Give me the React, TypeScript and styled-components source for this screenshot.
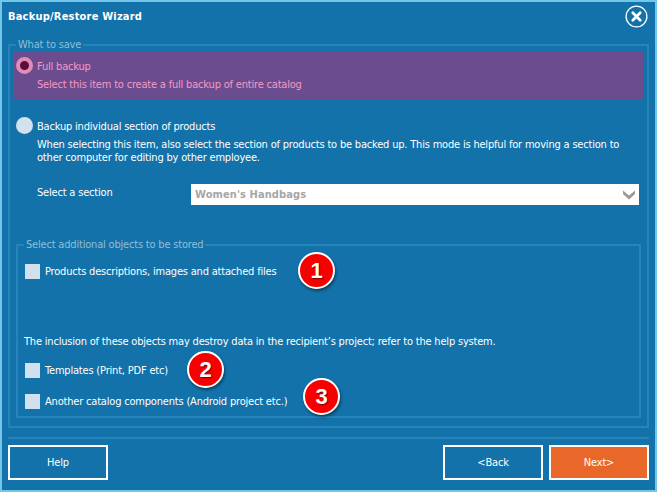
import React from "react";
import styled, { createGlobalStyle } from "styled-components";

const GlobalStyle = createGlobalStyle`
  html, body {
    margin: 0;
    padding: 0;
    background: #1372a9;
  }
  body {
    font-family: "DejaVu Sans Condensed", "DejaVu Sans", "Liberation Sans", sans-serif;
    font-size: 11px;
    letter-spacing: -0.19px;
    color: #fff;
  }
`;

const App = () => {
  return (
    <Wizard>
      <GlobalStyle />
      <TitleBar>
        <Title>Backup/Restore Wizard</Title>
        <CloseButton aria-label="Close">
          <svg width="23" height="23" viewBox="0 0 23 23">
            <circle cx="11.5" cy="11.5" r="10.4" fill="none" stroke="#fff" strokeWidth="1.3" />
            <path d="M7.8 7.8l7.4 7.4M15.2 7.8l-7.4 7.4" stroke="#fff" strokeWidth="2.8" strokeLinecap="round" />
          </svg>
        </CloseButton>
      </TitleBar>

      <OuterGroup>
        <GroupLegend $indent={3}>What to save</GroupLegend>
        <ModeOption $active>
          <ModeHead>
            <Radio $checked />
            <ModeLabel>Full backup</ModeLabel>
          </ModeHead>
          <ModeText>Select this item to create a full backup of entire catalog</ModeText>
        </ModeOption>

        <ModeOption $spaced>
          <ModeHead>
            <Radio />
            <ModeLabel>Backup individual section of products</ModeLabel>
          </ModeHead>
          <ModeText>
            When selecting this item, also select the section of products to be backed up. This mode is helpful for moving a section to
            <br />
            other computer for editing by other employee.
          </ModeText>
        </ModeOption>

        <SectionRow>
          <SectionLabel>Select a section</SectionLabel>
          <SectionSelect>
            <span>Women's Handbags</span>
            <svg width="12" height="10" viewBox="0 0 12 10">
              <path d="M0 0.5L6 5.5L12 0.5V4L6 9.5L0 4Z" fill="#999" />
            </svg>
          </SectionSelect>
        </SectionRow>

        <InnerGroup>
          <GroupLegend $indent={-1}>Select additional objects to be stored</GroupLegend>
          <CheckRow>
            <CheckBox />
            <span>Products descriptions, images and attached files</span>
          </CheckRow>
          <Note>The inclusion of these objects may destroy data in the recipient’s project; refer to the help system.</Note>
          <CheckRow $gap={15}>
            <CheckBox />
            <span>Templates (Print, PDF etc)</span>
          </CheckRow>
          <CheckRow $gap={16}>
            <CheckBox />
            <span>Another catalog components (Android project etc.)</span>
          </CheckRow>
        </InnerGroup>
      </OuterGroup>

      <Divider />

      <Footer>
        <WizardButton>Help</WizardButton>
        <FooterRight>
          <WizardButton>&lt;Back</WizardButton>
          <WizardButton $primary>Next&gt;</WizardButton>
        </FooterRight>
      </Footer>

      <Badge $left={298} $top={252}>1</Badge>
      <Badge $left={187} $top={351}>2</Badge>
      <Badge $left={303} $top={378}>3</Badge>
    </Wizard>
  );
};

const Wizard = styled.div`
  position: relative;
  box-sizing: border-box;
  width: 657px;
  height: 492px;
  padding: 0 6px;
  background: #1372a9;
  border: 2px solid #72c6ea;
  overflow: hidden;
`;

const TitleBar = styled.div`
  display: flex;
  align-items: center;
  justify-content: space-between;
  height: 28px;
  margin-bottom: 9px;
`;

const Title = styled.div`
  font-weight: 700;
  font-size: 11px;
  letter-spacing: 0.2px;
`;

const CloseButton = styled.div`
  display: flex;
  margin-right: 1px;
`;

const OuterGroup = styled.fieldset`
  box-sizing: border-box;
  margin: 0;
  padding: 0 3px 8px;
  min-width: 0;
  border: 2px solid #2585bb;
`;

const GroupLegend = styled.legend<{ $indent: number }>`
  margin-left: ${(p) => p.$indent}px;
  padding: 0 2px;
  height: 12px;
  line-height: 12px;
  color: #8fbfda;
`;

const ModeOption = styled.div<{ $active?: boolean; $spaced?: boolean }>`
  padding: 6px 3px ${(p) => (p.$active ? "8px" : "0")};
  margin-top: ${(p) => (p.$spaced ? "12px" : "0")};
  border-radius: 3px;
  background: ${(p) => (p.$active ? "#6b4c8f" : "transparent")};
  color: ${(p) => (p.$active ? "#f59ac3" : "#fff")};
`;

const ModeHead = styled.div`
  display: flex;
  align-items: center;
  gap: 4px;
  height: 17px;
`;

const ModeLabel = styled.span`
  padding-top: 1px;
`;

const Radio = styled.span<{ $checked?: boolean }>`
  box-sizing: border-box;
  flex: none;
  width: 17px;
  height: 17px;
  border-radius: 50%;
  background: ${(p) => (p.$checked ? "#5d0c3c" : "#d2e3ef")};
  border: ${(p) => (p.$checked ? "4px solid #e18db7" : "none")};
`;

const ModeText = styled.div`
  margin: 4px 0 0 21px;
  line-height: 13px;
  white-space: nowrap;
`;

const SectionRow = styled.div`
  display: flex;
  align-items: center;
  margin: 20px 5px 0 24px;
  height: 21px;
`;

const SectionLabel = styled.div`
  width: 154px;
  margin-top: -5px;
`;

const SectionSelect = styled.div`
  flex: 1;
  display: flex;
  align-items: center;
  justify-content: space-between;
  height: 21px;
  padding: 0 4px;
  background: #fff;
  color: #a6a6a6;
  font-size: 11px;
  font-weight: 700;
  letter-spacing: 0.1px;
`;

const InnerGroup = styled.fieldset`
  box-sizing: border-box;
  margin: 34px 3px 0;
  padding: 0 7px 7px;
  min-width: 0;
  border: 2px solid #2585bb;
`;

const CheckRow = styled.div<{ $gap?: number }>`
  display: flex;
  align-items: center;
  gap: 5px;
  height: 15px;
  margin-top: ${(p) => p.$gap ?? 13}px;
`;

const CheckBox = styled.span`
  flex: none;
  width: 15px;
  height: 15px;
  background: #d0e0ed;
`;

const Note = styled.div`
  margin: 56px 0 0 -1px;
  line-height: 13px;
  white-space: nowrap;
`;

const Divider = styled.div`
  height: 2px;
  margin-top: 9px;
  background: #2585bb;
`;

const Footer = styled.div`
  display: flex;
  justify-content: space-between;
  margin-top: 6px;
`;

const FooterRight = styled.div`
  display: flex;
  gap: 6px;
`;

const WizardButton = styled.div<{ $primary?: boolean }>`
  box-sizing: border-box;
  display: flex;
  align-items: center;
  justify-content: center;
  width: 100px;
  height: 35px;
  border: 2px solid #fff;
  background: ${(p) => (p.$primary ? "#e96728" : "transparent")};
`;

const Badge = styled.div<{ $left: number; $top: number }>`
  position: absolute;
  left: ${(p) => p.$left - 2}px;
  top: ${(p) => p.$top - 2}px;
  box-sizing: border-box;
  display: flex;
  align-items: center;
  justify-content: center;
  width: 37px;
  height: 37px;
  border: 2px solid #fff;
  border-radius: 50%;
  background: #f90000;
  box-shadow: 1px 2px 3px rgba(0, 0, 0, 0.45);
  font-family: "Liberation Sans", Arial, sans-serif;
  font-size: 22px;
  font-weight: 700;
  letter-spacing: 0;
  text-shadow: 1px 1px 1px rgba(0, 0, 0, 0.5);
`;

export default App;
